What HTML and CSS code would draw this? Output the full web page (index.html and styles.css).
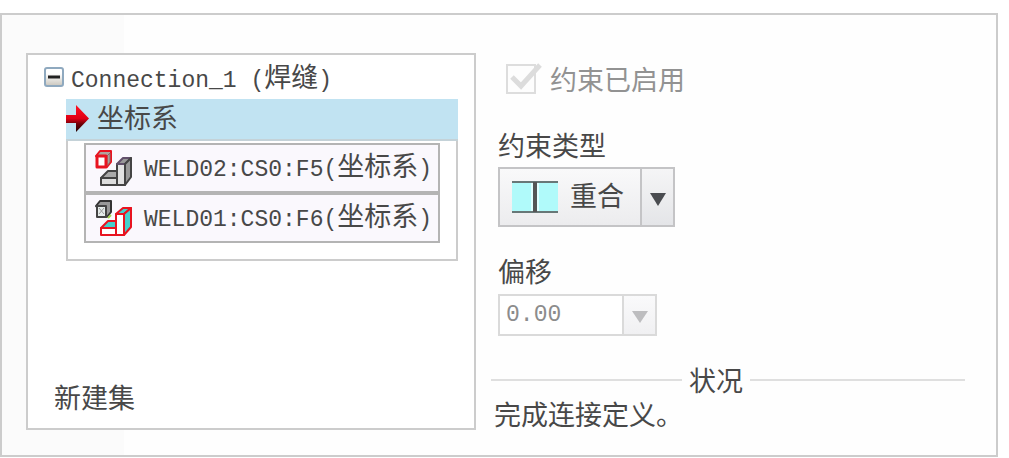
FILE: index.html
```html
<!DOCTYPE html>
<html lang="zh-CN">
<head>
<meta charset="utf-8">
<title>约束</title>
<link rel="stylesheet" href="styles.css">
</head>
<body>
<main class="panel">
  <section class="tree">
    <div class="tree-root">
      <button class="collapse" type="button" aria-label="折叠">
        <svg width="20" height="20" viewBox="0 0 20 20">
          <defs><linearGradient id="box" x1="0" y1="0" x2="0" y2="1"><stop offset=".3" stop-color="#fff"/><stop offset="1" stop-color="#c9c6bd"/></linearGradient></defs>
          <rect x="1" y="1" width="18" height="18" rx="2" fill="url(#box)" stroke="#8fa9bf" stroke-width="2"/>
          <path d="M4 10h12" stroke="#222" stroke-width="3"/>
        </svg>
      </button>
      <span class="mono">Connection_1 (<span class="cjk">焊缝</span>)</span>
    </div>
    <div class="group">
      <div class="group-head">
        <svg width="24" height="28" viewBox="0 0 24 28">
          <defs><linearGradient id="arrow" x1="0" y1="0" x2="0" y2="1"><stop offset="0" stop-color="#ff1020"/><stop offset=".5" stop-color="#e00014"/><stop offset=".7" stop-color="#700008"/><stop offset="1" stop-color="#200000"/></linearGradient></defs>
          <path d="M0 10h10V0l13 13.500L10 27V18H0z" fill="url(#arrow)"/>
        </svg>
        <span class="group-name">坐标系</span>
      </div>
      <div class="refs">
        <button class="ref" type="button">
          <svg width="37" height="37" viewBox="0 0 37 37" stroke-width="2" stroke-linejoin="round">
            <path d="M1 6L5 1h11v11l-4 5z" fill="#b0a49e" stroke="#e81420"/>
            <path d="M12 6l3-3v9l-3 4z" fill="#aaa29c" stroke="#8c6a66" stroke-width="1"/>
            <path d="M2 6h9v11H2z" fill="#fff" stroke="#e81420" stroke-width="3"/>
            <path d="M6 28l7-7h10v7z" fill="#aaa" stroke="#444"/>
            <path d="M6 28h17v7H6z" fill="#ddd" stroke="#444"/>
            <path d="M22 14h8v21h-8z" fill="#e2e2e2" stroke="#444"/>
            <path d="M22 14l6-6h8l-6 6z" fill="#999" stroke="#62506b"/>
            <path d="M30 14l6-6v19l-6 8z" fill="#999" stroke="#444"/>
          </svg>
          <span class="mono">WELD02:CS0:F5(<span class="cjk">坐标系</span>)</span>
        </button>
        <button class="ref" type="button">
          <svg width="37" height="37" viewBox="0 0 37 37" stroke-width="2" stroke-linejoin="round">
            <path d="M1 6L5 1h11v11l-4 5z" fill="#999" stroke="#333"/>
            <path d="M2 6h9v11H2z" fill="#e5ecea" stroke="#444"/>
            <path d="M4 8l5 6M9 8l-5 6" stroke="#999" stroke-width="1"/>
            <path d="M13 18l3-3" stroke="#a6d850"/>
            <path d="M6 28l7-7h10v7z" fill="#45cfcc" stroke="#e81420"/>
            <path d="M6 28h15v7H6z" fill="#fff" stroke="#e81420"/>
            <path d="M21 14h8v21h-8z" fill="#fff" stroke="#e81420"/>
            <path d="M21 14l7-6h8l-7 6z" fill="#45cfcc" stroke="#e81420"/>
            <path d="M29 14l7-6v19l-7 8z" fill="#45cfcc" stroke="#e81420"/>
          </svg>
          <span class="mono">WELD01:CS0:F6(<span class="cjk">坐标系</span>)</span>
        </button>
      </div>
    </div>
    <button class="new-set" type="button">新建集</button>
  </section>
  <section class="settings">
    <div class="enabled">
      <span class="check">
        <input type="checkbox" id="enabled" checked disabled>
        <svg class="tick" width="36" height="32" viewBox="0 0 36 32"><path d="M6 14l9 9L34 2" fill="none" stroke="#dcdcdc" stroke-width="5"/></svg>
      </span>
      <label for="enabled">约束已启用</label>
    </div>
    <div class="field type-field">
      <span class="label">约束类型</span>
      <div class="split">
        <button class="split-main" type="button">
          <svg width="46" height="32" viewBox="0 0 46 32">
            <path d="M0 0h46v32H0z" fill="#b0fafa"/>
            <path d="M0 1h46M0 31h46" stroke="#687777" stroke-width="2"/>
            <path d="M20 2v28M26 2v28" stroke="#e0ffff" stroke-width="2"/>
            <path d="M23 1v30" stroke="#555" stroke-width="4"/>
          </svg>
          <span>重合</span>
        </button>
        <button class="split-arrow" type="button" aria-label="选择约束类型">
          <svg width="16" height="13" viewBox="0 0 16 13"><path d="M0 0h16L8 13z" fill="#4a4c50"/></svg>
        </button>
      </div>
    </div>
    <div class="field offset-field">
      <label class="label" for="offset">偏移</label>
      <div class="combo">
        <input type="text" id="offset" value="0.00" disabled>
        <button class="combo-arrow" type="button" disabled aria-label="选择偏移">
          <svg width="16" height="12" viewBox="0 0 16 12"><path d="M0 0h16L8 12z" fill="#bdbdbf"/></svg>
        </button>
      </div>
    </div>
    <div class="status">
      <h2 class="status-title">状况</h2>
      <p class="status-text">完成连接定义。</p>
    </div>
  </section>
</main>
</body>
</html>
```
FILE: styles.css
```css
* {
  box-sizing: border-box;
}

body {
  margin: 0;
  padding: 13px 11px 3px 0;
  background: #fff;
  color: #484848;
  font: 27px/32px "Noto Sans CJK SC", sans-serif;
}

button,
input {
  margin: 0;
  padding: 0;
  border: 0;
  background: none;
  color: inherit;
  font: inherit;
}

svg {
  display: block;
  flex: none;
}

.panel {
  display: grid;
  grid-template-columns: 450fr 475fr;
  column-gap: 15px;
  padding: 38px 31px 25px 24px;
  border: 2px solid #ccc;
  background: linear-gradient(90deg, #fbfbfb 122px, #fefefe 122px);
}

.mono {
  font-family: "Liberation Mono", monospace;
  font-size: 23px;
  white-space: pre;
}

.cjk {
  font-family: "Noto Sans CJK SC", sans-serif;
  font-size: 27px;
}

.tree {
  display: flex;
  flex-direction: column;
  padding: 6px 16px 15px;
  border: 2px solid #ccc;
  background: #fff;
}

.tree-root {
  display: flex;
  align-items: center;
  gap: 7px;
  height: 38px;
  padding-bottom: 4px;
}

.collapse {
  padding-bottom: 2px;
}

.group {
  margin-left: 22px;
  border: 2px solid #ccc;
  border-top: 0;
}

.group-head {
  display: flex;
  align-items: center;
  gap: 7px;
  height: 42px;
  margin: 0 -2px;
  border-bottom: 2px solid #c4d2d8;
  background: #c1e3f2;
}

.group-name {
  padding-bottom: 4px;
}

.refs {
  display: flex;
  flex-direction: column;
  padding: 2px 16px 16px;
}

.ref {
  display: flex;
  align-items: center;
  gap: 12px;
  height: 50px;
  padding: 0 6px 0 9px;
  border: 2px solid #b4b4b4;
  background: #faf8fd;
}

.ref .mono {
  padding-bottom: 2px;
}

.new-set {
  align-self: flex-start;
  margin-top: auto;
  margin-left: 10px;
}

.settings {
  display: flex;
  flex-direction: column;
  padding-top: 10px;
}

.enabled {
  display: flex;
  align-items: center;
  gap: 8px;
  padding-left: 15px;
  color: #929292;
}

.check {
  display: grid;
}

.check input {
  appearance: none;
  grid-area: 1 / 1;
  align-self: center;
  width: 30px;
  height: 30px;
  border: 2px solid #ddd;
  background: #fdfdfd;
}

.tick {
  grid-area: 1 / 1;
  z-index: 1;
}

.field {
  display: flex;
  flex-direction: column;
  align-items: flex-start;
  padding-left: 7px;
}

.type-field {
  gap: 6px;
  margin-top: 34px;
}

.offset-field {
  gap: 7px;
  margin-top: 28px;
}

.split {
  display: flex;
  height: 60px;
  border: 2px solid #c4c4c6;
  background: linear-gradient(#f9f9fa, #ececee);
}

.split-main {
  display: flex;
  align-items: center;
  gap: 12px;
  padding: 0 16px 0 12px;
}

.split-main span {
  padding-bottom: 4px;
}

.split-arrow {
  display: grid;
  place-items: center;
  width: 33px;
  padding-top: 5px;
  border-left: 2px solid #c4c4c6;
  background: linear-gradient(#f5f5f6, #e4e5e8);
}

.combo {
  display: flex;
  height: 42px;
  border: 2px solid #dadada;
}

.combo input {
  width: 122px;
  padding: 0 6px;
  background: #fff;
  color: #8c8c8c;
  font: 23px/28px "Liberation Mono", monospace;
}

.combo-arrow {
  display: grid;
  place-items: center;
  width: 33px;
  padding-top: 4px;
  border-left: 2px solid #dadada;
  background: linear-gradient(#fafafb, #f0f0f2);
}

.status {
  margin-top: 28px;
}

.status-title {
  display: flex;
  align-items: center;
  gap: 7px;
  margin: 0;
  font: inherit;
}

.status-title::before,
.status-title::after {
  content: "";
  flex: 190;
  height: 2px;
  background: #dfdfdf;
}

.status-title::after {
  flex-grow: 214;
}

.status-text {
  margin: 2px 0 0 3px;
}
```
